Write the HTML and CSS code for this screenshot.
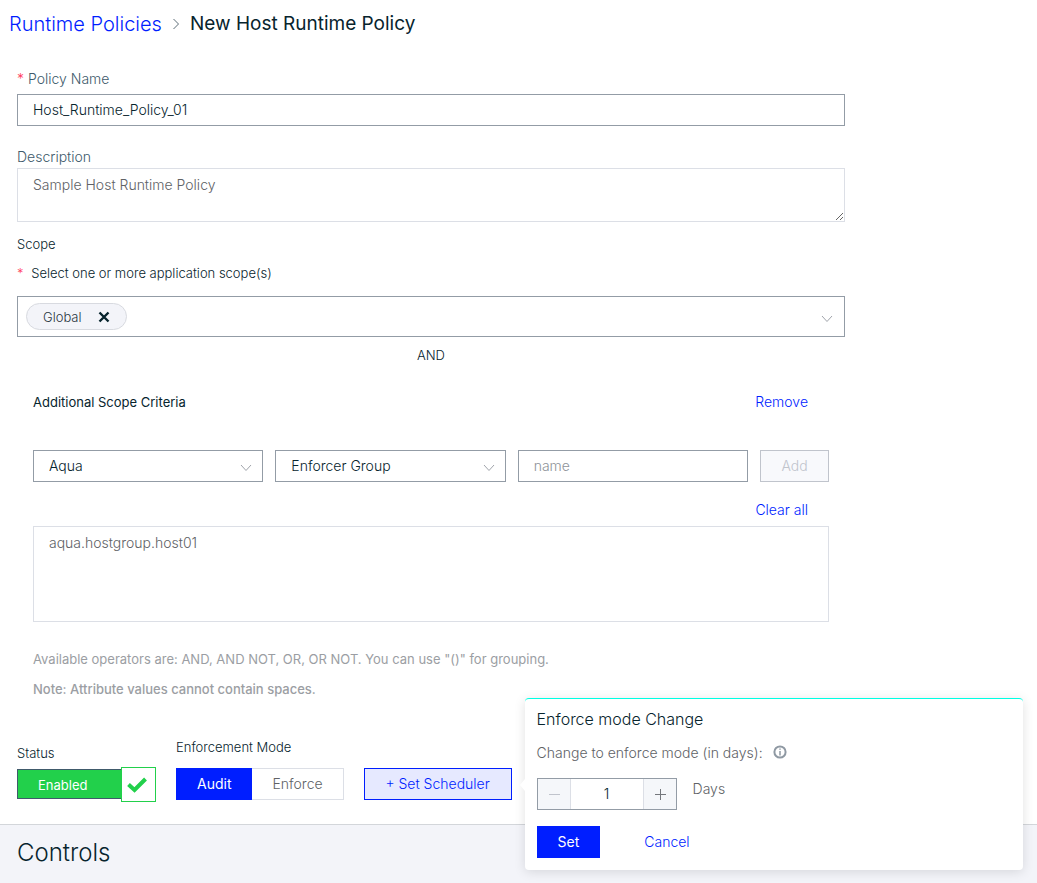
FILE: index.html
```html
<!DOCTYPE html>
<html lang="en">
<head>
<meta charset="utf-8">
<meta name="viewport" content="width=device-width, initial-scale=1">
<title>New Host Runtime Policy</title>
<link rel="stylesheet" href="styles.css">
</head>
<body>
<header class="page-header">
  <nav class="breadcrumb" aria-label="Breadcrumb">
    <a class="breadcrumb-link" href="#">Runtime Policies</a>
    <svg class="breadcrumb-sep" viewBox="0 0 8 12" aria-hidden="true"><path d="M1.500 1 6.500 6 1.500 11"/></svg>
    <h1 class="breadcrumb-current">New Host Runtime Policy</h1>
  </nav>
</header>

<main>
  <form class="policy-form">
    <div class="field field-name">
      <label class="field-label" for="policy-name"><span class="required">*</span> Policy Name</label>
      <input class="control" id="policy-name" type="text" value="Host_Runtime_Policy_01">
    </div>

    <div class="field field-description">
      <label class="field-label" for="description">Description</label>
      <textarea class="area area-description" id="description">Sample Host Runtime Policy</textarea>
    </div>

    <h2 class="section-label">Scope</h2>
    <label class="section-label scope-label" for="scope"><span class="required">*</span> Select one or more application scope(s)</label>
    <div class="scope-box">
      <span class="tag">Global
        <button class="tag-remove" type="button" aria-label="Remove Global">
          <svg viewBox="0 0 12 12" aria-hidden="true"><path d="M1.500 1.500 10.500 10.500M10.500 1.500 1.500 10.500"/></svg>
        </button>
      </span>
      <span class="select-wrap scope-select">
        <select class="scope-input" id="scope"><option value=""></option></select>
        <svg class="chevron" viewBox="0 0 12 8" aria-hidden="true"><path d="M1 1 6 6.500 11 1"/></svg>
      </span>
    </div>
    <p class="joiner">AND</p>

    <section class="criteria">
      <div class="criteria-head">
        <h3 class="criteria-title">Additional Scope Criteria</h3>
        <button class="link-button" type="button">Remove</button>
      </div>
      <div class="criteria-row">
        <span class="select-wrap">
          <select class="control" aria-label="Category"><option>Aqua</option></select>
          <svg class="chevron" viewBox="0 0 12 8" aria-hidden="true"><path d="M1 1 6 6.500 11 1"/></svg>
        </span>
        <span class="select-wrap">
          <select class="control" aria-label="Attribute"><option>Enforcer Group</option></select>
          <svg class="chevron" viewBox="0 0 12 8" aria-hidden="true"><path d="M1 1 6 6.500 11 1"/></svg>
        </span>
        <input class="control" type="text" placeholder="name" aria-label="Name">
        <button class="button button-disabled" type="button" disabled>Add</button>
      </div>
      <div class="criteria-clear">
        <button class="link-button" type="button">Clear all</button>
      </div>
      <textarea class="area area-criteria" aria-label="Scope expression">aqua.hostgroup.host01</textarea>
      <p class="hint">Available operators are: AND, AND NOT, OR, OR NOT. You can use "()" for grouping.</p>
      <p class="hint hint-strong">Note: Attribute values cannot contain spaces.</p>
    </section>

    <div class="mode-row">
      <div class="status">
        <span class="section-label" id="status-label">Status</span>
        <button class="switch" type="button" role="switch" aria-checked="true" aria-labelledby="status-label">
          <span class="switch-text">Enabled</span>
          <span class="switch-knob"><svg viewBox="0 0 20 16" aria-hidden="true"><path d="M1.500 7.500 7.500 13 18.500 2"/></svg></span>
        </button>
      </div>

      <fieldset class="mode">
        <legend class="section-label">Enforcement Mode</legend>
        <div class="segmented">
          <label class="segment"><input class="segment-input" type="radio" name="mode" checked>Audit</label>
          <label class="segment"><input class="segment-input" type="radio" name="mode">Enforce</label>
        </div>
      </fieldset>

      <div class="scheduler">
        <button class="button button-outline" type="button">+ Set Scheduler</button>
        <div class="popover" role="dialog" aria-labelledby="popover-title">
          <h2 class="popover-title" id="popover-title">Enforce mode Change</h2>
          <div class="popover-text">
            <label for="days">Change to enforce mode (in days):</label>
            <svg class="info" viewBox="0 0 14 14" aria-hidden="true"><circle cx="7" cy="7" r="5.600"/><path d="M7 6v4.500M7 3.500v1.300"/></svg>
          </div>
          <div class="days-row">
            <div class="stepper">
              <button class="step" type="button" aria-label="Decrease" disabled><svg viewBox="0 0 12 12" aria-hidden="true"><path d="M1 6.500h11"/></svg></button>
              <input class="step-value" id="days" type="text" inputmode="numeric" value="1">
              <button class="step" type="button" aria-label="Increase"><svg viewBox="0 0 12 12" aria-hidden="true"><path d="M1 6.500h11M6.500 1v11"/></svg></button>
            </div>
            <span class="days-unit">Days</span>
          </div>
          <div class="popover-actions">
            <button class="button button-primary" type="button">Set</button>
            <button class="link-button" type="button">Cancel</button>
          </div>
        </div>
      </div>
    </div>
  </form>

  <section class="controls">
    <h2 class="controls-title">Controls</h2>
  </section>
</main>
</body>
</html>
```
FILE: styles.css
```css
:root {
  --blue: #001eff;
  --ink: #07242d;
  --text: #28363f;
  --muted: #606266;
  --slate: #405a6b;
  --line: #939ca6;
  --line-soft: #dcdfe6;
  --panel: #f3f4f9;
  --green: #22d04b;
}

* { box-sizing: border-box; }

body {
  min-height: 100vh;
  margin: 0;
  display: flex;
  flex-direction: column;
  background: #fff;
  color: var(--text);
  font: 300 14px/20px Inter, "Liberation Sans", sans-serif;
}

h1, h2, h3, p { margin: 0; }

button, input, select, textarea {
  margin: 0;
  font: inherit;
  color: inherit;
}

button { cursor: pointer; }

svg {
  fill: none;
  stroke: currentColor;
}

main {
  flex: 1;
  display: flex;
  flex-direction: column;
}

.page-header { padding: 10px 9px 0; }

.breadcrumb {
  display: flex;
  align-items: center;
  gap: 10px;
  font-size: 20px;
  line-height: 28px;
}

.breadcrumb-link {
  color: var(--blue);
  text-decoration: none;
}

.breadcrumb-sep {
  width: 8px;
  height: 12px;
  color: #5d6e78;
}

.breadcrumb-current {
  font-size: 19px;
  font-weight: 400;
  color: var(--ink);
}

.policy-form {
  width: 100%;
  max-width: 862px;
  padding: 31px 17px 22px;
}

.field {
  display: flex;
  flex-direction: column;
}

.field-name { gap: 5px; }

.field-description { margin-top: 21px; gap: 1px; }

.field-label { color: var(--slate); }

.required { color: #ff3b5c; }

.control {
  width: 100%;
  height: 32px;
  padding: 0 15px;
  border: 1px solid var(--line);
  border-radius: 0;
  background: #fff;
  color: var(--ink);
  appearance: none;
}

input.control { padding-bottom: 2px; }

.control::placeholder { color: #8e9399; opacity: 1; }

.area {
  display: block;
  width: 100%;
  padding: 6px 15px;
  border: 1px solid var(--line-soft);
  background: #fff;
  color: var(--muted);
}

.area-description { height: 54px; resize: vertical; }

.area-criteria { height: 96px; resize: none; }

.section-label {
  display: block;
  padding: 0;
  font-size: 13px;
  font-weight: 300;
  line-height: 20px;
  color: var(--ink);
}

h2.section-label { margin-top: 12px; }

.scope-label { margin-top: 9px; }

.scope-label .required { margin-right: 4px; }

.scope-box {
  display: flex;
  align-items: center;
  height: 41px;
  margin-top: 13px;
  padding-left: 8px;
  border: 1px solid var(--line);
}

.tag {
  display: flex;
  align-items: center;
  gap: 16px;
  height: 27px;
  padding: 0 16px;
  border: 1px solid #d8dae0;
  border-radius: 14px;
  background: var(--panel);
  font-size: 13px;
}

.tag-remove {
  display: flex;
  padding: 0;
  border: 0;
  background: none;
  color: var(--ink);
}

.tag-remove svg {
  width: 12px;
  height: 12px;
  stroke-width: 2.400;
}

.select-wrap {
  position: relative;
  display: block;
}

.chevron {
  position: absolute;
  top: 50%;
  right: 11px;
  width: 12px;
  height: 8px;
  margin-top: -2px;
  color: #a0a4ab;
  pointer-events: none;
}

.scope-select { flex: 1; }

.scope-input {
  display: block;
  width: 100%;
  height: 37px;
  border: 0;
  background: none;
  appearance: none;
}

.joiner {
  margin-top: 8px;
  font-size: 13px;
  text-align: center;
  color: var(--ink);
}

.criteria { padding: 26px 16px 0; }

.criteria-head {
  display: flex;
  justify-content: space-between;
  align-items: center;
  padding-right: 21px;
}

.criteria-title {
  font-size: 13px;
  font-weight: 400;
  line-height: 22px;
  color: var(--ink);
}

.link-button {
  padding: 0;
  border: 0;
  background: none;
  color: var(--blue);
}

.criteria-row {
  display: grid;
  grid-template-columns: 1fr 1fr 1fr 69px;
  gap: 12px;
  margin-top: 37px;
}

.criteria-clear {
  display: flex;
  justify-content: flex-end;
  padding: 18px 21px 6px 0;
}

.hint {
  margin-top: 10px;
  font-size: 13px;
  font-weight: 400;
  color: #9b9ea3;
}

.area-criteria + .hint { margin-top: 27px; }

.hint-strong { font-weight: 500; }

.button {
  height: 32px;
  padding: 0 20px;
  border: 1px solid var(--blue);
  white-space: nowrap;
}

.button-disabled {
  border-color: #c0c4cc;
  background: #f8f9fc;
  color: #c0c4cc;
}

.button-outline {
  min-width: 148px;
  background: #e6e9ff;
  color: var(--blue);
}

.button-primary {
  background: var(--blue);
  color: #fff;
  font-weight: 400;
}

.mode-row {
  display: flex;
  align-items: flex-end;
  gap: 20px;
  margin-top: 38px;
}

.status {
  display: flex;
  flex-direction: column;
  gap: 4px;
}

.switch {
  display: flex;
  align-items: flex-start;
  width: 139px;
  height: 35px;
  padding: 0;
  border: 0;
  background: none;
}

.switch-text {
  flex: 1;
  height: 30px;
  margin-top: 2px;
  padding-left: 20px;
  border: 1px solid var(--slate);
  border-right: 0;
  background: var(--green);
  color: #fff;
  font-size: 13px;
  font-weight: 400;
  line-height: 30px;
  text-align: left;
}

.switch-knob {
  display: flex;
  align-items: center;
  justify-content: center;
  width: 35px;
  height: 35px;
  padding: 0 4px 0 0;
  border: 1px solid var(--green);
  background: #fff;
  color: var(--green);
}

.switch-knob svg {
  width: 20px;
  height: 16px;
  stroke-width: 4;
}

.mode {
  min-width: 0;
  margin: 0 0 2px;
  padding: 0;
  border: 0;
}

.segmented {
  display: flex;
  margin-top: 11px;
}

.segment {
  height: 32px;
  padding: 0 20px;
  border: 1px solid var(--line-soft);
  border-left: 0;
  color: var(--muted);
  line-height: 30px;
  cursor: pointer;
}

.segment:has(:checked) {
  border: 1px solid var(--blue);
  background: var(--blue);
  color: #fff;
  font-weight: 400;
}

.segment-input {
  position: absolute;
  opacity: 0;
  pointer-events: none;
}

.scheduler {
  position: relative;
  margin-bottom: 2px;
}

.popover {
  position: absolute;
  top: -70px;
  left: calc(100% + 13px);
  width: 498px;
  padding: 9px 12px 12px;
  border-top: 1px solid #00ffe4;
  border-radius: 4px;
  background: #fff;
  box-shadow: 0 2px 12px rgba(0, 0, 0, 0.12);
}

.popover::before {
  content: "";
  position: absolute;
  top: 50%;
  left: -5px;
  margin-top: -6px;
  border: solid transparent;
  border-width: 6px 5px 6px 0;
  border-right-color: #fff;
}

.popover-title {
  font-size: 16px;
  font-weight: 300;
  line-height: 22px;
  color: var(--ink);
}

.popover-text {
  display: flex;
  align-items: center;
  gap: 10px;
  margin-top: 13px;
  color: var(--muted);
}

.info {
  width: 14px;
  height: 14px;
  margin-bottom: 2px;
  color: #8f99a3;
  stroke-width: 2;
}

.info path { stroke-width: 1.500; }

.days-row {
  display: flex;
  gap: 16px;
  margin-top: 15px;
  line-height: 22px;
  color: var(--muted);
}

.stepper {
  display: flex;
  width: 140px;
  height: 32px;
  border: 1px solid var(--line);
}

.step {
  display: flex;
  align-items: center;
  justify-content: center;
  width: 32px;
  padding: 0;
  border: 0;
  background: #f5f7fa;
  color: #74777c;
}

.step:disabled { color: #c0c4cc; }

.step svg {
  width: 12px;
  height: 12px;
}

.step-value {
  flex: 1;
  min-width: 0;
  padding: 0;
  border: solid var(--line-soft);
  border-width: 0 1px;
  border-radius: 0;
  color: var(--ink);
  text-align: center;
}

.popover-actions {
  display: flex;
  align-items: center;
  gap: 44px;
  margin-top: 16px;
}

.controls {
  flex: 1;
  padding: 12px 17px;
  border-top: 1px solid #d3d6da;
  background: var(--panel);
}

.controls-title {
  font-size: 24px;
  font-weight: 300;
  line-height: 32px;
  color: var(--ink);
}
```
